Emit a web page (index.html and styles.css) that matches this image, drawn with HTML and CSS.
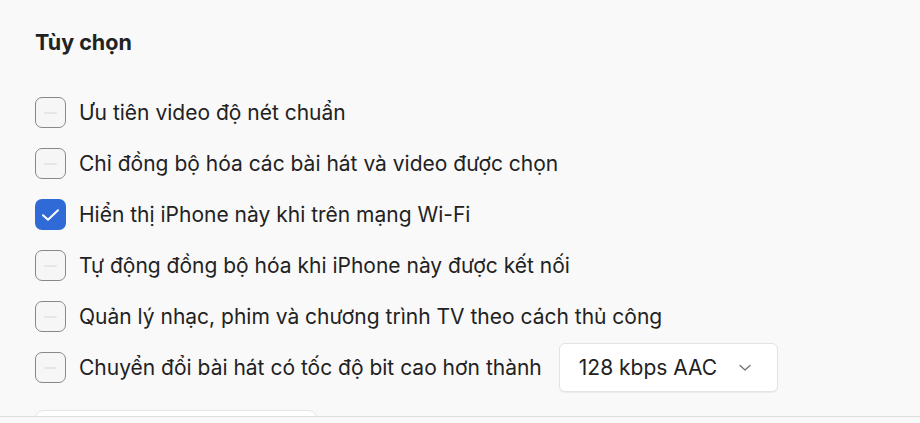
FILE: index.html
```html
<!DOCTYPE html>
<html>
    <head>
        <meta charset="utf-8">
        <link rel="stylesheet" href="styles.css">
    </head>

    <body>
        <div class="panel">
            <h2 class="title">Tùy chọn</h2>

            <div class="options">
                <label class="option">
                    <span class="box"></span>
                    Ưu tiên video độ nét chuẩn
                </label>
                <label class="option">
                    <span class="box"></span>
                    Chỉ đồng bộ hóa các bài hát và video được chọn
                </label>
                <label class="option">
                    <span class="box checked">
                        <svg width="19" height="14" viewBox="0 0 19 14">
                            <path d="M2 7.2 L7 11.8 L17 2.2" fill="none" stroke="#fff" stroke-width="2" stroke-linecap="round" stroke-linejoin="round"/>
                        </svg>
                    </span>
                    Hiển thị iPhone này khi trên mạng Wi-Fi
                </label>
                <label class="option">
                    <span class="box"></span>
                    Tự động đồng bộ hóa khi iPhone này được kết nối
                </label>
                <label class="option">
                    <span class="box"></span>
                    Quản lý nhạc, phim và chương trình TV theo cách thủ công
                </label>
                <div class="option">
                    <span class="box"></span>
                    Chuyển đổi bài hát có tốc độ bit cao hơn thành
                    <div class="select">
                        128 kbps AAC
                        <svg class="chevron" width="12" height="8" viewBox="0 0 12 8">
                            <path d="M1 1.5 L6 6 L11 1.5" fill="none" stroke="#777" stroke-width="1.4" stroke-linecap="round" stroke-linejoin="round"/>
                        </svg>
                    </div>
                </div>
            </div>

            <div class="card"></div>
        </div>
    </body>
</html>
```

FILE: styles.css
```css
html, body {
    margin: 0;
    height: 100%;
}

body {
    background: #f9f9f9;
    font-family: Inter, "Noto Sans", sans-serif;
    color: #222;
    overflow: hidden;
}

.panel {
    height: 417px;
    box-sizing: border-box;
    padding: 28px 0 0 35px;
    border-bottom: 1px solid #dedede;
    overflow: hidden;
}

.title {
    margin: 0;
    font-size: 21.5px;
    font-weight: 700;
    line-height: 28px;
}

.options {
    margin-top: 41px;
    display: flex;
    flex-direction: column;
    gap: 20px;
}

.option {
    display: flex;
    align-items: center;
    gap: 13px;
    height: 31px;
    font-size: 21px;
}

.box {
    flex: none;
    width: 31px;
    height: 31px;
    box-sizing: border-box;
    border: 1.5px solid #888;
    border-radius: 7px;
    background: #f6f6f6;
    display: flex;
    align-items: center;
    justify-content: center;
}

/* faint dash drawn in an empty box */
.box:empty::after {
    content: "";
    width: 13px;
    height: 2px;
    border-radius: 1px;
    background: #e6e6e6;
}

.box.checked {
    border: none;
    background: #2f6ad7;
}

.select {
    margin-left: 4px;
    width: 219px;
    height: 49px;
    flex: none;
    box-sizing: border-box;
    padding: 0 26px 0 19px;
    display: flex;
    align-items: center;
    justify-content: space-between;
    background: #fff;
    border: 1px solid #e3e3e3;
    border-radius: 6px;
    box-shadow: 0 1px 1px rgba(0, 0, 0, 0.06);
}

.card {
    margin-top: 27px;
    width: 280px;
    height: 20px;
    background: #fff;
    border: 1px solid #e6e6e6;
    border-radius: 8px;
}
```
